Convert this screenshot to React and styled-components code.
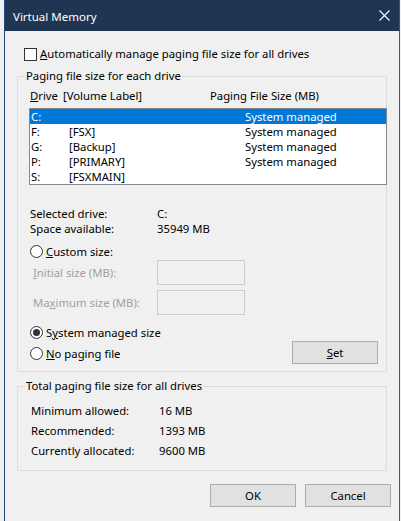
import React from "react";
import styled, { createGlobalStyle } from "styled-components";

const GlobalStyle = createGlobalStyle`
  html, body {
    margin: 0;
    padding: 0;
    background: #f0f0f0;
  }
  body {
    font-family: "Noto Sans", "Liberation Sans", sans-serif;
    font-size: 11.3px;
    color: #000;
  }
`;

const drives = [
  { letter: "C:", label: "", size: "System managed", selected: true },
  { letter: "F:", label: "[FSX]", size: "System managed" },
  { letter: "G:", label: "[Backup]", size: "System managed" },
  { letter: "P:", label: "[PRIMARY]", size: "System managed" },
  { letter: "S:", label: "[FSXMAIN]", size: "" },
];

export default function App() {
  return (
    <>
      <GlobalStyle />
      <Frame>
        <TitleBar>
          <Title>Virtual Memory</Title>
          <CloseButton>
            <svg width="11" height="11" viewBox="0 0 11 11">
              <path d="M0.5 0.5 L10.5 10.5 M10.5 0.5 L0.5 10.5" stroke="#fff" strokeWidth="1.1" />
            </svg>
          </CloseButton>
        </TitleBar>

        <Body>
          <CheckRow>
            <CheckBox />
            <span>
              <u>A</u>utomatically manage paging file size for all drives
            </span>
          </CheckRow>

          <Group>
            <Legend>Paging file size for each drive</Legend>
            <GroupInner>
              <HeaderRow>
                <Col $w={33}>
                  <u>D</u>rive
                </Col>
                <Col $w={147}>[Volume Label]</Col>
                <Col>Paging File Size (MB)</Col>
              </HeaderRow>
              <List>
                {drives.map((d) => (
                  <ListRow key={d.letter} $selected={d.selected}>
                    <Col $w={38}>{d.letter}</Col>
                    <Col $w={176}>{d.label}</Col>
                    <Col>{d.size}</Col>
                  </ListRow>
                ))}
              </List>

              <InfoBlock>
                <InfoRow>
                  <Col $w={127}>Selected drive:</Col>
                  <Col>C:</Col>
                </InfoRow>
                <InfoRow>
                  <Col $w={127}>Space available:</Col>
                  <Col>35949 MB</Col>
                </InfoRow>
              </InfoBlock>

              <RadioRow $top={8}>
                <Radio />
                <span>
                  <u>C</u>ustom size:
                </span>
              </RadioRow>
              <FieldRow $top={1}>
                <FieldLabel>
                  <u>I</u>nitial size (MB):
                </FieldLabel>
                <TextBox />
              </FieldRow>
              <FieldRow $top={5}>
                <FieldLabel>
                  Ma<u>x</u>imum size (MB):
                </FieldLabel>
                <TextBox />
              </FieldRow>

              <RadioRow $top={10}>
                <Radio $checked />
                <span>
                  S<u>y</u>stem managed size
                </span>
              </RadioRow>
              <BottomRow>
                <RadioRow $top={0}>
                  <Radio />
                  <span>
                    <u>N</u>o paging file
                  </span>
                </RadioRow>
                <Button $right={8}>
                  <u>S</u>et
                </Button>
              </BottomRow>
            </GroupInner>
          </Group>

          <Group $top={6}>
            <Legend>Total paging file size for all drives</Legend>
            <TotalsInner>
              <TotalRow>
                <Col $w={128}>Minimum allowed:</Col>
                <Col>16 MB</Col>
              </TotalRow>
              <TotalRow>
                <Col $w={128}>Recommended:</Col>
                <Col>1393 MB</Col>
              </TotalRow>
              <TotalRow>
                <Col $w={128}>Currently allocated:</Col>
                <Col>9600 MB</Col>
              </TotalRow>
            </TotalsInner>
          </Group>

          <DialogButtons>
            <Button>OK</Button>
            <Button>Cancel</Button>
          </DialogButtons>
        </Body>
      </Frame>
    </>
  );
}

const Frame = styled.div`
  box-sizing: border-box;
  margin-left: 4px;
  width: 396px;
  height: 521px;
  background: #f0f0f0;
  border-left: 1px solid #24467c;
  border-right: 1px solid #4a5568;
  display: flex;
  flex-direction: column;
`;

const TitleBar = styled.div`
  height: 31px;
  background: #1f3552;
  color: #fff;
  display: flex;
  align-items: center;
  justify-content: space-between;
  padding-left: 8px;
  flex-shrink: 0;
`;

const Title = styled.div`
  font-size: 11.5px;
  padding-top: 1px;
`;

const CloseButton = styled.div`
  height: 31px;
  padding-right: 9px;
  display: flex;
  align-items: center;
`;

const Body = styled.div`
  padding: 16px 12px 0 12px;
  display: flex;
  flex-direction: column;
`;

const CheckRow = styled.div`
  display: flex;
  align-items: center;
  gap: 3px;
  height: 14px;
  margin-left: 7px;
  line-height: 14px;
`;

const CheckBox = styled.span`
  box-sizing: border-box;
  width: 13px;
  height: 13px;
  border: 1px solid #333;
  background: #fff;
  flex-shrink: 0;
`;

const Group = styled.fieldset`
  margin: ${(p) => p.$top ?? 7}px 0 0 0;
  padding: 0;
  min-width: 0;
  border: 1px solid #dcdcdc;
`;

const Legend = styled.legend`
  margin-left: 7px;
  padding: 0 1px;
  line-height: 16px;
`;

const GroupInner = styled.div`
  padding: 4px 0 7px 12px;
  display: flex;
  flex-direction: column;
`;

const HeaderRow = styled.div`
  display: flex;
  line-height: 15px;
`;

const Col = styled.span`
  display: inline-block;
  white-space: nowrap;
  width: ${(p) => (p.$w ? `${p.$w}px` : "auto")};
  flex-shrink: 0;
`;

const List = styled.div`
  margin: 5px -1px 0 -1px;
  border: 1px solid #828790;
  background: #fff;
`;

const ListRow = styled.div`
  display: flex;
  height: 15px;
  line-height: 15px;
  padding-left: 1px;
  background: ${(p) => (p.$selected ? "#0078d7" : "transparent")};
  color: ${(p) => (p.$selected ? "#fff" : "#000")};
`;

const InfoBlock = styled.div`
  margin-top: 21px;
`;

const InfoRow = styled.div`
  display: flex;
  line-height: 15px;
`;

const RadioRow = styled.div`
  display: flex;
  align-items: center;
  gap: 3px;
  height: 15px;
  line-height: 15px;
  margin-top: ${(p) => p.$top}px;
`;

const Radio = styled.span`
  box-sizing: border-box;
  width: 13px;
  height: 13px;
  border-radius: 50%;
  border: 1px solid #333;
  background: #fff;
  flex-shrink: 0;
  display: flex;
  align-items: center;
  justify-content: center;
  &::after {
    content: "";
    display: ${(p) => (p.$checked ? "block" : "none")};
    width: 7px;
    height: 7px;
    border-radius: 50%;
    background: #333;
  }
`;

const FieldRow = styled.div`
  display: flex;
  align-items: center;
  margin-top: ${(p) => p.$top}px;
`;

const FieldLabel = styled.span`
  width: 124px;
  padding-left: 3px;
  color: #a0a0a0;
  white-space: nowrap;
`;

const TextBox = styled.div`
  box-sizing: border-box;
  width: 88px;
  height: 25px;
  border: 1px solid #cccccc;
  background: #f0f0f0;
`;

const BottomRow = styled.div`
  display: flex;
  align-items: center;
  justify-content: space-between;
  height: 23px;
  margin-top: 1px;
  & > ${RadioRow} {
    padding-top: 2px;
  }
`;

const Button = styled.div`
  box-sizing: border-box;
  width: 86px;
  height: 23px;
  margin-right: ${(p) => p.$right ?? 0}px;
  border: 1px solid #adadad;
  background: #e1e1e1;
  display: flex;
  align-items: center;
  justify-content: center;
  line-height: 15px;
`;

const TotalsInner = styled.div`
  padding: 6px 0 10px 13px;
`;

const TotalRow = styled.div`
  display: flex;
  align-items: center;
  height: 20px;
`;

const DialogButtons = styled.div`
  display: flex;
  justify-content: flex-end;
  gap: 9px;
  margin: 13px -4px 0 0;
`;
